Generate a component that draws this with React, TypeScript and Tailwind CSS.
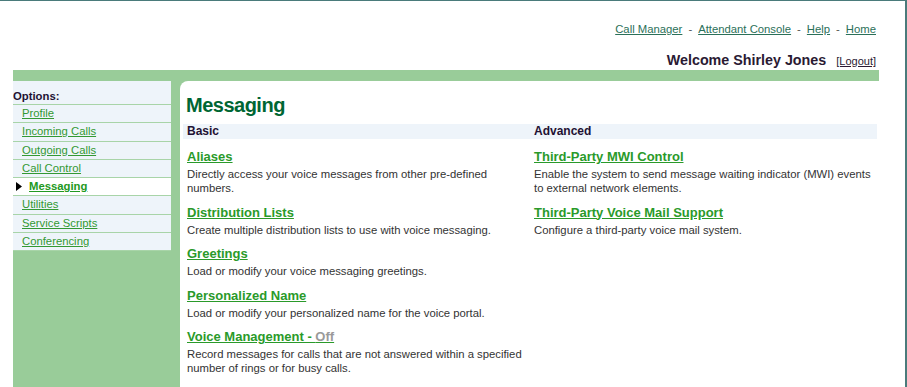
const topLinks = ['Call Manager', 'Attendant Console', 'Help', 'Home'];

const menu = [
  'Profile',
  'Incoming Calls',
  'Outgoing Calls',
  'Call Control',
  'Messaging',
  'Utilities',
  'Service Scripts',
  'Conferencing',
];

type Item = { title: string; desc: string; status?: string };

const basic: Item[] = [
  { title: 'Aliases', desc: 'Directly access your voice messages from other pre-defined numbers.' },
  { title: 'Distribution Lists', desc: 'Create multiple distribution lists to use with voice messaging.' },
  { title: 'Greetings', desc: 'Load or modify your voice messaging greetings.' },
  { title: 'Personalized Name', desc: 'Load or modify your personalized name for the voice portal.' },
  {
    title: 'Voice Management - ',
    status: 'Off',
    desc: 'Record messages for calls that are not answered within a specified number of rings or for busy calls.',
  },
];

const advanced: Item[] = [
  { title: 'Third-Party MWI Control', desc: 'Enable the system to send message waiting indicator (MWI) events to external network elements.' },
  { title: 'Third-Party Voice Mail Support', desc: 'Configure a third-party voice mail system.' },
];

function Column({ label, items }: { label: string; items: Item[] }) {
  return (
    <div className="w-[347px]">
      <div className="h-[15px] bg-[#eef4fa] pl-[4px] text-[12px] leading-[15px] font-bold text-[#221133]">{label}</div>
      <div className="pl-[4px] pt-[10px] flex flex-col gap-[9.5px]">
        {items.map((it) => (
          <div key={it.title}>
            <div className="h-[16px] text-[13px] leading-[16px] font-bold">
              <a href="#" className="text-[#2a9a2a] underline">
                {it.title}
                {it.status && <span className="text-[#9a9a9a]">{it.status}</span>}
              </a>
            </div>
            <p className="mt-[2px] w-[340px] text-[11.3px] leading-[14px] text-[#333333]">{it.desc}</p>
          </div>
        ))}
      </div>
    </div>
  );
}

export default function App() {
  return (
    <div
      className="w-[907px] h-[387px] overflow-hidden bg-white border-t border-r-2 border-[#4a7b7b]"
      style={{ fontFamily: '"Liberation Sans", Arial, sans-serif' }}
    >
      {/* header */}
      <div className="h-[69px] pr-[29px] flex flex-col items-end">
        <div className="mt-[21px] text-[11.3px] leading-[14px] text-[#555]">
          {topLinks.map((l, i) => (
            <span key={l}>
              {i > 0 && <span className="mx-[6px]">-</span>}
              <a href="#" className="text-[#2b7059] underline">{l}</a>
            </span>
          ))}
        </div>
        <div className="mt-[16px] flex items-baseline">
          <span className="text-[14.3px] leading-[17px] font-bold text-[#2a1a33]">Welcome Shirley Jones</span>
          <a href="#" className="ml-[10px] text-[11px] text-[#2a1a33] underline">[Logout]</a>
        </div>
      </div>

      {/* green frame */}
      <div className="ml-[13px] w-[866px] h-[317px] bg-[#99cc99] pt-[11px] flex">
        <div className="w-[158px] self-start bg-[#eef4fa] text-[11.3px]">
          <div className="h-[24px] pt-[8px] border-b border-[#a8d4a8] font-bold text-[#221133] leading-[14px]">Options:</div>
          {menu.map((m) =>
            m === 'Messaging' ? (
              <div key={m} className="h-[18.25px] border-b border-[#a8d4a8] bg-white flex items-center">
                <svg width="6" height="9" viewBox="0 0 6 9" className="ml-[3px] mr-[7px]">
                  <path d="M0 0 L6 4.5 L0 9 Z" fill="#000" />
                </svg>
                <a href="#" className="font-bold text-[#229922] underline leading-[17px]">{m}</a>
              </div>
            ) : (
              <div key={m} className="h-[18.25px] border-b border-[#a8d4a8] pl-[9px] leading-[17px]">
                <a href="#" className="text-[#339933] underline">{m}</a>
              </div>
            )
          )}
        </div>

        <div className="ml-[9px] flex-1 bg-white rounded-tl-[8px] pt-[12px]">
          <h1 className="pl-[6px] text-[20px] leading-[24px] font-bold tracking-[-0.5px] text-[#006633]">Messaging</h1>
          <div className="mt-[7px] ml-[3px] w-[694px] flex">
            <Column label="Basic" items={basic} />
            <Column label="Advanced" items={advanced} />
          </div>
        </div>
      </div>
    </div>
  );
}
